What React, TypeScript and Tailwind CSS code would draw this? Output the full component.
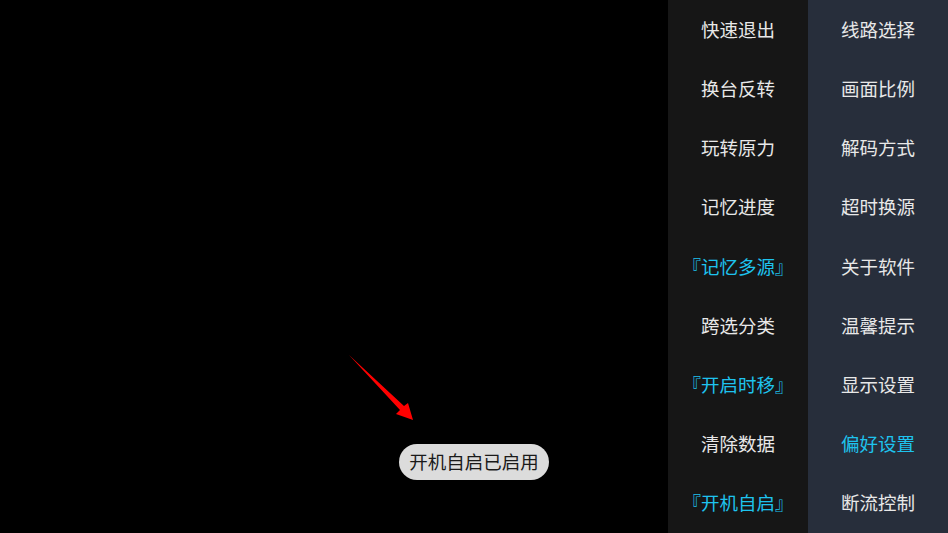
import React from 'react';

const leftItems = [
  { label: '快速退出' },
  { label: '换台反转' },
  { label: '玩转原力' },
  { label: '记忆进度' },
  { label: '『记忆多源』', active: true },
  { label: '跨选分类' },
  { label: '『开启时移』', active: true },
  { label: '清除数据' },
  { label: '『开机自启』', active: true },
];

const rightItems = [
  { label: '线路选择' },
  { label: '画面比例' },
  { label: '解码方式' },
  { label: '超时换源' },
  { label: '关于软件' },
  { label: '温馨提示' },
  { label: '显示设置' },
  { label: '偏好设置', active: true },
  { label: '断流控制' },
];

const Column = ({ items, bg }: { items: { label: string; active?: boolean }[]; bg: string }) => (
  <div className={`w-[140px] h-full flex flex-col ${bg}`}>
    {items.map((it) => (
      <div
        key={it.label}
        className={`flex-1 flex items-center justify-center text-[18.5px] ${it.active ? 'text-[#1ec3ee]' : 'text-[#e8e8e8]'}`}
      >
        {it.label}
      </div>
    ))}
  </div>
);

const App = () => {
  return (
    <div
      className="w-[948px] h-[533px] bg-black flex overflow-hidden"
      style={{ fontFamily: '"Noto Sans CJK SC", "Noto Sans", sans-serif' }}
    >
      {/* 播放区域 */}
      <div className="relative flex-1">
        <svg className="absolute left-0 top-0" width="668" height="533">
          <polygon points="349,355 404,406 408,403 413,420 396,414 400,410" fill="#ff0000" />
        </svg>
        <div className="absolute left-[399px] top-[444px] h-[36px] w-[150px] rounded-full bg-[#dcdcdc] text-[#1a1a1a] text-[18.5px] flex items-center justify-center">
          开机自启已启用
        </div>
      </div>
      {/* 设置菜单 */}
      <Column items={leftItems} bg="bg-[#161616]" />
      <Column items={rightItems} bg="bg-[#272e3b]" />
    </div>
  );
};

export default App;
